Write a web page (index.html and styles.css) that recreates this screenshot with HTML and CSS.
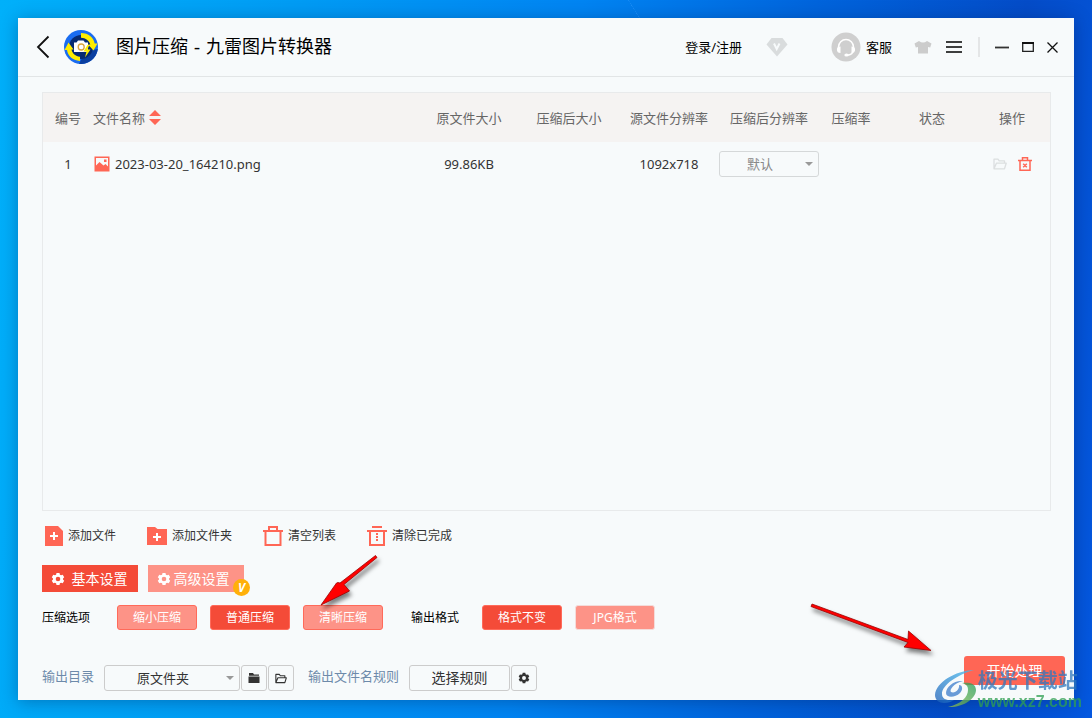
FILE: index.html
```html
<!DOCTYPE html>
<html lang="zh-CN">
<head>
<meta charset="utf-8">
<title>图片压缩 - 九雷图片转换器</title>
<link rel="stylesheet" href="styles.css">
</head>
<body>
<svg class="defs" aria-hidden="true">
  <symbol id="gear" viewBox="0 0 14 14"><path fill="currentColor" fill-rule="evenodd" d="M5.500 1h3l.4 1.700 1.200.6 1.600-.5 1.500 2.500-1.200 1.200v1l1.200 1.200-1.500 2.500-1.600-.5-1.200.6L8.500 13h-3l-.4-1.700-1.200-.6-1.600.5L.8 8.700 2 7.500v-1L.8 5.300l1.500-2.500 1.600.5 1.200-.6zM7 4.700a2.300 2.300 0 1 0 0 4.600 2.300 2.300 0 0 0 0-4.600z"/></symbol>
  <symbol id="folder-open" viewBox="0 0 14 12"><path fill="none" stroke="currentColor" stroke-width="1.300" stroke-linejoin="round" d="M1 10.800V1.200h4l1.200 1.600h5.300v2.200M1 10.800 3.400 5.200h9.800l-1.700 5.600z"/></symbol>
</svg>
<main class="window">
  <header class="titlebar">
    <button class="icon-btn back" aria-label="返回"><svg width="14" height="24" viewBox="0 0 14 24"><path d="M12.500 1.500 2 12l10.500 10.500" fill="none" stroke="#111" stroke-width="1.800"/></svg></button>
    <svg class="logo" width="34" height="34" viewBox="0 0 34 34">
      <circle cx="17" cy="17" r="17" fill="#1a6cf0"/>
      <path d="M33.800 19A17 17 0 0 1 15 33.900L18 28l11-8z" fill="#0b3fa0"/>
      <circle cx="17" cy="17" r="12" fill="#072a72"/>
      <path d="M17 3c7.500 0 12.500 4.500 13.700 10.500H33.500L29.500 20.500 24 14.500h2.300C25 10.500 21.800 8 17 7.800z" fill="#ffed00"/>
      <path d="M16 31C8.500 30.500 3.700 25.500 3 20H.5L4.500 12.500 9.500 19.500H7.500c.8 4 4 6.800 8.500 7.300z" fill="#ffed00"/>
      <path d="M10 12.500h2.500l1.500-2h5.500l1.500 2h3V22H10z" fill="#fff"/>
      <circle cx="17.200" cy="17" r="3" fill="#fff" stroke="#d9a441" stroke-width="1.300"/>
      <path d="M23.500 15 19.500 21.500h3l-1.500 6 5.500-8h-3l1.800-4.500z" fill="#ffed00"/>
    </svg>
    <h1>图片压缩 - 九雷图片转换器</h1>
    <a class="login" href="#">登录/注册</a>
    <svg class="vip" width="22" height="20" viewBox="0 0 22 20"><path d="M5.500 1h11L21.500 7.500 11 19.500 .5 7.500z" fill="#d9dcdd"/><path d="M8 6.500 10.700 12 13.500 6.500" fill="none" stroke="#f7fafb" stroke-width="2"/></svg>
    <button class="icon-btn service"><svg width="30" height="30" viewBox="0 0 30 30"><circle cx="15" cy="15" r="14.500" fill="#cfcfcf"/><path d="M7.500 17v-2a7.500 7.500 0 0 1 15 0v2M22.300 18c0 3-2.500 5-6.500 5.200" fill="none" stroke="#fff" stroke-width="1.500"/><path d="M9.500 14.500v6.500c-2.300 0-3.600-1.300-3.600-3.300s1.300-3.200 3.600-3.200zM20.500 14.500v6.500c2.300 0 3.600-1.300 3.600-3.300s-1.300-3.200-3.600-3.200z" fill="#fff"/><ellipse cx="15.500" cy="23" rx="2.200" ry="1.500" fill="#fff"/></svg><span>客服</span></button>
    <button class="icon-btn skin" aria-label="换肤"><svg width="18" height="14" viewBox="0 0 18 14"><path d="M5 1q4 3 8 0l4.500 2.500-1.300 4-2.200-.5v6.500H4V7l-2.200.5L.5 3.500z" fill="#ccc"/></svg></button>
    <button class="icon-btn menu" aria-label="菜单"><svg width="16" height="12" viewBox="0 0 16 12"><path d="M0 1h16M0 6h16M0 11h16" stroke="#000" stroke-width="1.600"/></svg></button>
    <span class="divider"></span>
    <button class="icon-btn min" aria-label="最小化"><svg width="14" height="12" viewBox="0 0 14 12"><path d="M0 6.500h14" stroke="#333" stroke-width="1.800"/></svg></button>
    <button class="icon-btn max" aria-label="最大化"><svg width="12" height="10" viewBox="0 0 12 10"><path d="M.7 1v8.300h10.600V1" fill="none" stroke="#222" stroke-width="1.300"/><path d="M0 1h12" stroke="#111" stroke-width="2"/></svg></button>
    <button class="icon-btn close" aria-label="关闭"><svg width="11" height="11" viewBox="0 0 11 11"><path d="M.5.5l10 10M10.500.5l-10 10" stroke="#111" stroke-width="1.300"/></svg></button>
  </header>

  <div class="content">
    <section class="files">
      <table>
        <colgroup><col class="c-no"><col><col class="c-size"><col class="c-size"><col class="c-size"><col class="c-size"><col class="c-rate"><col class="c-state"><col class="c-op"></colgroup>
        <thead><tr>
          <th>编号</th>
          <th class="name"><div class="sortable">文件名称<svg width="12" height="15" viewBox="0 0 12 15"><path d="M0 6 6 0l6 6zM0 9h12l-6 6z" fill="#ff6655"/></svg></div></th>
          <th>原文件大小</th><th>压缩后大小</th><th>源文件分辨率</th><th>压缩后分辨率</th><th>压缩率</th><th>状态</th><th>操作</th>
        </tr></thead>
        <tbody><tr>
          <td>1</td>
          <td class="name"><div class="file"><svg width="16" height="16" viewBox="0 0 16 16"><rect x=".5" y=".5" width="15" height="15" fill="#ff6655"/><path d="M2 2h12v8.500L11.500 8 9.500 9.500 5.500 6 2 9.500z" fill="#f7fafb"/><rect x="10" y="3.500" width="2.500" height="2.500" fill="#ff6655"/></svg>2023-03-20_164210.png</div></td>
          <td>99.86KB</td><td></td><td>1092x718</td>
          <td><select class="resolution" aria-label="压缩后分辨率"><option>默认</option></select></td>
          <td></td><td></td>
          <td><div class="ops">
            <button class="icon-btn pale" aria-label="打开文件夹"><svg width="14" height="12"><use href="#folder-open"/></svg></button>
            <button class="icon-btn" aria-label="删除"><svg width="14" height="14" viewBox="0 0 14 14"><path d="M0 3.500h14M4.500 3V.8h5V3M2 4v9.200h10V4M5.200 6.700l3.600 3.600M8.800 6.700l-3.600 3.600" fill="none" stroke="#ff6655" stroke-width="1.500"/></svg></button>
          </div></td>
        </tr></tbody>
      </table>
    </section>

    <div class="toolbar">
      <button class="tool"><svg width="18" height="20" viewBox="0 0 18 20"><path d="M0 0h13l5 5v15H0z" fill="#ff6655"/><path d="M5 10h8M9 6v8" stroke="#fff" stroke-width="2"/></svg>添加文件</button>
      <button class="tool"><svg width="20" height="20" viewBox="0 0 20 20"><path d="M0 1h8l2.500 2H20v16H0z" fill="#ff6655"/><path d="M6 11h8M10 7v8" stroke="#fff" stroke-width="2"/></svg>添加文件夹</button>
      <button class="tool"><svg width="20" height="20" viewBox="0 0 20 20"><path d="M0 5h20M6 5V1h8v4M2.500 5v14h15V5" fill="none" stroke="#ff6655" stroke-width="2"/></svg>清空列表</button>
      <button class="tool"><svg width="20" height="20" viewBox="0 0 20 20"><path d="M5 1h10M0 5h20M3 5v14h14V5" fill="none" stroke="#ff6655" stroke-width="2"/><path d="M10 7v8" stroke="#ff6655" stroke-width="2" stroke-dasharray="2 1"/></svg>清除已完成</button>
    </div>

    <div class="tabs">
      <button class="tab active"><svg width="14" height="14"><use href="#gear"/></svg>基本设置</button>
      <button class="tab pro"><svg width="14" height="14"><use href="#gear"/></svg>高级设置<span class="badge">V</span></button>
    </div>

    <div class="options">
      <span class="label">压缩选项</span>
      <div class="choices">
        <button class="choice">缩小压缩</button>
        <button class="choice on">普通压缩</button>
        <button class="choice">清晰压缩</button>
      </div>
      <span class="label format">输出格式</span>
      <div class="choices">
        <button class="choice on">格式不变</button>
        <button class="choice plain">JPG格式</button>
      </div>
    </div>

    <footer class="output">
      <label for="dir">输出目录</label>
      <select id="dir" class="dir"><option>原文件夹</option></select>
      <button class="square" aria-label="选择文件夹"><svg width="12" height="10" viewBox="0 0 12 10"><path d="M1 0h4l1 1.500h5v1.200H1zM.5 3.500h11V10H.5z" fill="#333"/></svg></button>
      <button class="square" aria-label="打开文件夹"><svg width="12" height="11"><use href="#folder-open"/></svg></button>
      <label class="rule-label" for="rule">输出文件名规则</label>
      <button id="rule" class="rule">选择规则</button>
      <button class="square" aria-label="规则设置"><svg width="12" height="12"><use href="#gear"/></svg></button>
      <button class="start">开始处理</button>
    </footer>
  </div>
</main>

<svg class="arrow first" width="80" height="66" viewBox="0 0 80 66"><path d="M67 7.500 34 34.500l5.500 6.500L11 55 26.500 33l1.500-.5 2 .5L65.500 5.500z" fill="#f00" stroke="#900" stroke-width=".8"/></svg>
<svg class="arrow second" width="140" height="70" viewBox="0 0 140 70"><path d="M12 9 108 44.500l.5-8.500L131 55.500 104 52l4-4.500L11 11.500z" fill="#f00" stroke="#900" stroke-width=".8"/></svg>
<div class="watermark">
  <svg width="43" height="42" viewBox="0 0 43 42">
    <defs>
      <linearGradient id="sky" x1="0" y1="1" x2="1" y2="0"><stop offset="0" stop-color="#1c5fb8"/><stop offset="1" stop-color="#45bdf0"/></linearGradient>
      <linearGradient id="leaf" x1="0" y1="1" x2="1" y2="0"><stop offset="0" stop-color="#9ac04c"/><stop offset="1" stop-color="#1f9c58"/></linearGradient>
    </defs>
    <path d="M39 2C20 3 1 14 0 27c0 5 4 8 9 8 4 0 7-1 10-3-7 1-12-1-12-6C7 17 22 7 39 2z" fill="url(#sky)"/>
    <path d="M28 13c-9-1-17 6-17 12 0 5 9 5 14 0 3-3 3-8-1-8 1 4-4 9-8 7-2-2 3-9 12-11z" fill="#3a7ccb"/>
    <path d="M27 15c6-1 14 0 14 7 0 9-14 18-28 17 13-3 20-10 20-17 0-4-2-6-6-7z" fill="url(#leaf)"/>
  </svg>
  <div class="mark-text"><span class="mark-name">极光下载站</span><span class="mark-url">www.xz7.com</span></div>
</div>
</body>
</html>
```

FILE: styles.css
```css
* { box-sizing: border-box; }

body {
  margin: 0;
  min-height: 100vh;
  padding: 18px;
  display: flex;
  position: relative;
  overflow: hidden;
  color: #333;
  font: 13px/18px "Noto Sans", "Noto Sans CJK SC", sans-serif;
  background:
    linear-gradient(58deg, transparent 79%, rgba(60, 160, 255, .5) 79%, transparent 80%) no-repeat 570px 0 / 80px 40px,
    linear-gradient(96deg, #00b0fa 0%, #009cf4 25%, #0084f2 50%, #0064dc 70%, #044cc8 88%, #0458e0 100%);
}

button, select { font: inherit; color: inherit; cursor: pointer; }
svg { display: block; flex: none; }
.defs { position: absolute; width: 0; height: 0; }

.window {
  flex: 1;
  min-width: 0;
  display: flex;
  flex-direction: column;
  background: #f7fafb;
  box-shadow: 0 2px 16px rgba(0, 30, 80, .35);
}

.titlebar {
  height: 59px;
  padding: 0 16px 0 18px;
  display: flex;
  align-items: center;
  border-bottom: 1px solid #e2e5e6;
  color: #000;
}
.titlebar h1 {
  flex: 1;
  margin: 0 0 0 18px;
  font: 400 18px/26px "DejaVu Sans", "Noto Sans CJK SC", sans-serif;
}
.icon-btn {
  display: flex;
  align-items: center;
  gap: 5px;
  padding: 0;
  border: 0;
  background: none;
}
.logo { margin-left: 14px; }
.login { color: #000; text-decoration: none; }
.vip { margin-left: 24px; }
.service { margin-left: 43px; }
.skin { margin-left: 22px; }
.menu { margin-left: 14px; }
.divider { width: 2px; height: 20px; margin-left: 16px; background: #e4e6e7; }
.min { margin-left: 15px; }
.max { margin-left: 13px; }
.close { margin-left: 13px; }

.content {
  flex: 1;
  display: flex;
  flex-direction: column;
  padding: 15px 23px 9px 24px;
}

.files { flex: 1; border: 1px solid #e8eaeb; }
.files table { width: 100%; table-layout: fixed; border-collapse: collapse; }
.c-no { width: 50px; }
.c-size { width: 100px; }
.c-rate { width: 64px; }
.c-state { width: 98px; }
.c-op { width: 69px; }
.files th, .files td { padding: 0; text-align: center; font-weight: 400; }
.files th { height: 49px; background: #f5f3f2; color: #666; white-space: nowrap; }
.files td { height: 43px; }
.files th:last-child, .files td:last-child { padding-right: 7px; }
.files .name { text-align: left; }
.sortable { display: flex; align-items: center; gap: 4px; }
.file { display: flex; align-items: center; gap: 5px; padding-left: 1px; }
.ops { display: flex; justify-content: center; align-items: center; gap: 11px; }
.pale { color: #dcdfe0; }

select {
  appearance: none;
  padding: 0 18px 0 0;
  border: 1px solid #d5d8d9;
  border-radius: 3px;
  text-align: center;
  text-align-last: center;
  background: url("data:image/svg+xml,%3Csvg xmlns='http://www.w3.org/2000/svg' width='8' height='4'%3E%3Cpath d='M0 0h8L4 4z' fill='%23999'/%3E%3C/svg%3E") no-repeat right 5px center;
}
.resolution { display: block; width: 100%; height: 26px; color: #888; }

.toolbar { display: flex; gap: 31px; padding: 15px 0 0 3px; }
.tool {
  display: flex;
  align-items: center;
  gap: 5px;
  height: 20px;
  padding: 0;
  border: 0;
  background: none;
  font-size: 12px;
}

.tabs { display: flex; gap: 10px; margin-top: 19px; }
.tab {
  position: relative;
  display: flex;
  align-items: center;
  justify-content: center;
  gap: 7px;
  width: 96px;
  height: 27px;
  padding: 0 2px 0 0;
  border: 0;
  background: #f44b38;
  color: #fff;
  font-size: 14px;
}
.pro { gap: 3px; padding-right: 6px; background: #fd9387; }
.badge {
  position: absolute;
  right: -6px;
  bottom: -4px;
  width: 17px;
  height: 17px;
  border-radius: 50%;
  background: #ffb00a;
  font-size: 12px;
  line-height: 17px;
  font-weight: 700;
  font-style: italic;
  text-align: center;
}

.options { display: flex; align-items: center; margin-top: 13px; font-size: 12px; }
.label { color: #000; }
.options .label { width: 75px; }
.options .format { width: 71px; margin-left: 28px; }
.choices { display: flex; gap: 13px; }
.choice {
  width: 80px;
  height: 25px;
  padding: 0;
  border: 1px solid #ff6a5a;
  border-radius: 3px;
  background: #fd9387;
  color: #fff;
}
.on { background: #f44b38; }
.plain { border-color: #f4dcda; }

.output { display: flex; align-items: flex-end; margin-top: 26px; }
.output label { align-self: center; padding-top: 4px; color: #6d8aaa; }
.output .dir { width: 136px; height: 26px; margin-left: 10px; border-color: #ccc; }
.square {
  display: flex;
  align-items: center;
  justify-content: center;
  width: 26px;
  height: 26px;
  margin-left: 1px;
  padding: 0;
  border: 1px solid #ccc;
  border-radius: 3px;
  background: none;
}
.output .rule-label { margin-left: 14px; }
.rule {
  width: 101px;
  height: 26px;
  margin-left: 10px;
  padding: 0;
  border: 1px solid #ccc;
  border-radius: 3px;
  background: none;
  font-size: 14px;
}
.start {
  width: 101px;
  height: 29px;
  margin: 0 -14px 6px auto;
  padding: 0;
  border: 0;
  border-radius: 3px;
  background: #ff6655;
  color: #fff;
  font-size: 14px;
}

.arrow { position: absolute; pointer-events: none; filter: drop-shadow(2px 4px 2px rgba(0, 0, 0, .5)); }
.first { left: 310px; top: 550px; }
.second { left: 800px; top: 595px; }

.watermark {
  position: absolute;
  right: 10px;
  bottom: 8px;
  display: flex;
  opacity: .75;
  pointer-events: none;
}
.mark-text { display: flex; flex-direction: column; white-space: nowrap; }
.mark-name { color: #2f78bd; font-size: 20px; line-height: 26px; font-weight: 700; }
.mark-url { color: #2fa052; font: 700 16px/16px "Liberation Sans", sans-serif; }
```
